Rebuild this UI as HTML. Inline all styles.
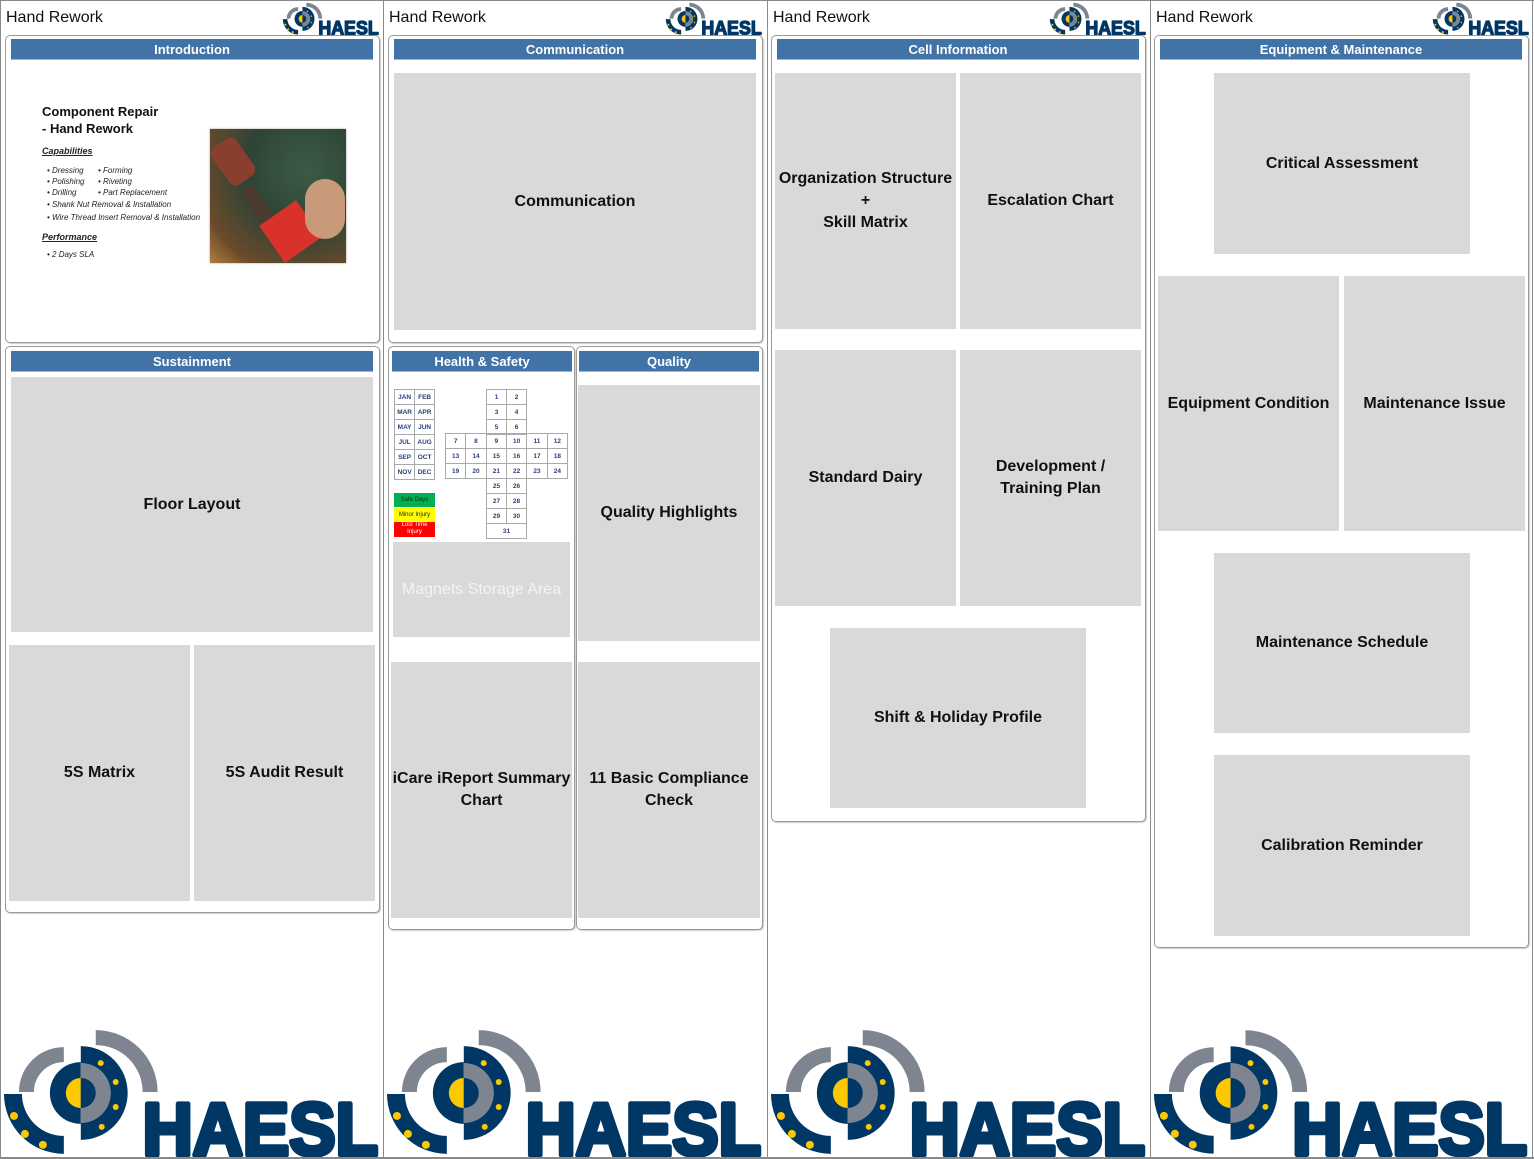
<!DOCTYPE html>
<html><head><meta charset="utf-8"><style>
*{margin:0;padding:0;box-sizing:border-box}
body{width:1534px;height:1159px;background:#fff;position:relative;overflow:hidden;font-family:"Liberation Sans",sans-serif}
.a{position:absolute}
.vl{position:absolute;top:0;width:1px;height:1159px;background:#8a8a8a}
.ht{position:absolute;top:9px;font-size:16px;color:#111}
.pn{position:absolute;border:1.5px solid #9a9a9a;border-radius:5px;background:#fff;box-shadow:1px 1px 1px #ccc}
.bar{position:absolute;height:21px;background:#4173a6;color:#fff;font-weight:bold;font-size:13px;text-align:center;line-height:21px;border-bottom:1px solid #9bb4d0}
.bx{position:absolute;background:#d9d9d9;display:flex;align-items:center;justify-content:center;text-align:center;font-weight:bold;font-size:16px;color:#111;line-height:22px}
.logo{position:absolute;z-index:5}
table{position:absolute;border-collapse:collapse;border:1.5px solid #4cc07a}
td{border:1px solid #aaa;height:15px;font-size:6.5px;font-weight:bold;color:#2b3f7a;text-align:center;padding:0}
.cap{font-style:italic;font-size:8px;color:#222}
</style></head><body>
<svg width="0" height="0" style="position:absolute"><defs>
<symbol id="lg" viewBox="0 0 383 139">
<path d="M18,72 A45 45 0 0 1 63,27 L63,42 A30 30 0 0 0 33,72 Z" fill="#7f8590"/>
<path d="M95,10 A62 62 0 0 1 157,72 L142,72 A47 47 0 0 0 95,25 Z" fill="#7f8590"/>
<path d="M3,74 A60 60 0 0 0 63,134 L63,116 A42 42 0 0 1 21,74 Z" fill="#003764"/>
<path d="M80,42 A31 31 0 0 0 80,104 Z" fill="#003764"/>
<path d="M80,58 A15 15 0 0 0 80,88 Z" fill="#fcc800"/>
<path d="M80,43 A30 30 0 0 1 80,103 Z" fill="#7f8590"/>
<path d="M80,58 A15 15 0 0 1 80,88 Z" fill="#003764"/>
<path d="M80,26 A47 47 0 0 1 80,120 L80,103 A30 30 0 0 0 80,43 Z" fill="#003764"/>
<g fill="#fcc800"><circle cx="100" cy="43" r="3"/><circle cx="115" cy="62" r="3"/><circle cx="115" cy="87" r="3"/><circle cx="101" cy="107" r="3"/>
<circle cx="13" cy="96" r="4"/><circle cx="24" cy="114" r="4"/><circle cx="42" cy="125" r="4"/></g>
<text x="142" y="135" font-family="Liberation Sans" font-weight="bold" font-size="74" fill="#003764" stroke="#003764" stroke-width="5" stroke-linejoin="round" textLength="236" lengthAdjust="spacingAndGlyphs">HAESL</text>
</symbol></defs></svg>

<div class="vl" style="left:0"></div><div class="vl" style="left:383px"></div><div class="vl" style="left:767px"></div><div class="vl" style="left:1150px"></div><div class="vl" style="left:1532px"></div>
<div class="a" style="left:0;top:0;width:1534px;height:1px;background:#8a8a8a"></div>
<div class="a" style="left:0;top:1157px;width:1534px;height:2px;background:#8a8a8a;z-index:6"></div>

<div class="ht" style="left:6px">Hand Rework</div><div class="ht" style="left:389px">Hand Rework</div><div class="ht" style="left:773px">Hand Rework</div><div class="ht" style="left:1156px">Hand Rework</div>
<svg class="logo" style="left:282px;top:0px" width="98" height="36"><use href="#lg"/></svg>
<svg class="logo" style="left:665px;top:0px" width="98" height="36"><use href="#lg"/></svg>
<svg class="logo" style="left:1049px;top:0px" width="98" height="36"><use href="#lg"/></svg>
<svg class="logo" style="left:1432px;top:0px" width="98" height="36"><use href="#lg"/></svg>

<svg class="logo" style="left:1px;top:1020px" width="382" height="139"><use href="#lg"/></svg>
<svg class="logo" style="left:384px;top:1020px" width="382" height="139"><use href="#lg"/></svg>
<svg class="logo" style="left:768px;top:1020px" width="382" height="139"><use href="#lg"/></svg>
<svg class="logo" style="left:1151px;top:1020px" width="381" height="139"><use href="#lg"/></svg>

<!-- col1 -->
<div class="pn" style="left:5px;top:35px;width:375px;height:308px"></div>
<div class="bar" style="left:11px;top:39px;width:362px">Introduction</div>
<div class="a" style="left:42px;top:103px;font-size:13px;font-weight:bold;line-height:17px;color:#111">Component Repair<br>- Hand Rework</div>
<div class="a" style="left:42px;top:146px;font-size:9px;font-weight:bold;font-style:italic;text-decoration:underline;color:#222">Capabilities</div>
<div class="a cap" style="left:47px;top:165px;line-height:11px">• Dressing<br>• Polishing<br>• Drilling</div>
<div class="a cap" style="left:98px;top:165px;line-height:11px">• Forming<br>• Riveting<br>• Part Replacement</div>
<div class="a cap" style="left:47px;top:199px;line-height:12.5px">• Shank Nut Removal &amp; Installation<br>• Wire Thread Insert Removal &amp; Installation</div>
<div class="a" style="left:42px;top:232px;font-size:9px;font-weight:bold;font-style:italic;text-decoration:underline;color:#222">Performance</div>
<div class="a cap" style="left:47px;top:250px">• 2 Days SLA</div>
<div class="a" style="left:210px;top:129px;width:136px;height:134px;overflow:hidden;background:radial-gradient(circle at 70% 30%,#3d5a45 0%,#2e4436 45%,#6b4a2a 80%,#b08040 100%);box-shadow:0 0 2px #999">
<div class="a" style="left:8px;top:10px;width:30px;height:45px;background:#8a3e2e;border-radius:8px;transform:rotate(-35deg)"></div>
<div class="a" style="left:40px;top:55px;width:14px;height:40px;background:#4a3a30;transform:rotate(-35deg)"></div>
<div class="a" style="left:58px;top:80px;width:45px;height:45px;background:#d8322a;transform:rotate(-35deg)"></div>
<div class="a" style="left:95px;top:50px;width:40px;height:60px;background:#c99a7a;border-radius:20px"></div>
</div>

<div class="pn" style="left:5px;top:346px;width:375px;height:567px"></div>
<div class="bar" style="left:11px;top:351px;width:362px">Sustainment</div>
<div class="bx" style="left:11px;top:377px;width:362px;height:255px">Floor Layout</div>
<div class="bx" style="left:9px;top:645px;width:181px;height:256px">5S Matrix</div>
<div class="bx" style="left:194px;top:645px;width:181px;height:256px">5S Audit Result</div>

<!-- col2 -->
<div class="pn" style="left:388px;top:35px;width:375px;height:308px"></div>
<div class="bar" style="left:394px;top:39px;width:362px">Communication</div>
<div class="bx" style="left:394px;top:73px;width:362px;height:257px">Communication</div>

<div class="pn" style="left:388px;top:346px;width:187px;height:584px"></div>
<div class="bar" style="left:392px;top:351px;width:180px">Health &amp; Safety</div>
<table style="left:394px;top:389px;width:41px"><tr><td>JAN</td><td>FEB</td></tr><tr><td>MAR</td><td>APR</td></tr><tr><td>MAY</td><td>JUN</td></tr><tr><td>JUL</td><td>AUG</td></tr><tr><td>SEP</td><td>OCT</td></tr><tr><td>NOV</td><td>DEC</td></tr></table>
<table style="left:486px;top:389px;width:41px;border-bottom:none"><tr><td>1</td><td>2</td></tr><tr><td>3</td><td>4</td></tr><tr><td>5</td><td>6</td></tr></table>
<table style="left:445px;top:433px;width:123px"><tr><td>7</td><td>8</td><td>9</td><td>10</td><td>11</td><td>12</td></tr><tr><td>13</td><td>14</td><td>15</td><td>16</td><td>17</td><td>18</td></tr><tr><td>19</td><td>20</td><td>21</td><td>22</td><td>23</td><td>24</td></tr></table>
<table style="left:486px;top:478px;width:41px;border-top:none"><tr><td>25</td><td>26</td></tr><tr><td>27</td><td>28</td></tr><tr><td>29</td><td>30</td></tr><tr><td colspan="2">31</td></tr></table>
<div class="a" style="left:394px;top:493px;width:41px;height:14px;background:#00b050;font-size:6px;text-align:center;line-height:14px;color:#222">Safe Days</div>
<div class="a" style="left:394px;top:508px;width:41px;height:14px;background:#ffff00;font-size:6px;text-align:center;line-height:14px;color:#222">Minor Injury</div>
<div class="a" style="left:394px;top:522px;width:41px;height:15px;background:#ff0000;font-size:6px;text-align:center;line-height:7px;color:#fff">Lost Time<br>Injury</div>
<div class="bx" style="left:393px;top:542px;width:177px;height:95px;color:#f4f4f4;font-weight:normal;font-size:16px">Magnets Storage Area</div>
<div class="bx" style="left:391px;top:662px;width:181px;height:256px">iCare iReport Summary<br>Chart</div>

<div class="pn" style="left:576px;top:346px;width:187px;height:584px"></div>
<div class="bar" style="left:579px;top:351px;width:180px">Quality</div>
<div class="bx" style="left:578px;top:385px;width:182px;height:256px">Quality Highlights</div>
<div class="bx" style="left:578px;top:662px;width:182px;height:256px">11 Basic Compliance<br>Check</div>

<!-- col3 -->
<div class="pn" style="left:771px;top:35px;width:375px;height:787px"></div>
<div class="bar" style="left:777px;top:39px;width:362px">Cell Information</div>
<div class="bx" style="left:775px;top:73px;width:181px;height:256px">Organization Structure<br>+<br>Skill Matrix</div>
<div class="bx" style="left:960px;top:73px;width:181px;height:256px">Escalation Chart</div>
<div class="bx" style="left:775px;top:350px;width:181px;height:256px">Standard Dairy</div>
<div class="bx" style="left:960px;top:350px;width:181px;height:256px">Development /<br>Training Plan</div>
<div class="bx" style="left:830px;top:628px;width:256px;height:180px">Shift &amp; Holiday Profile</div>

<!-- col4 -->
<div class="pn" style="left:1154px;top:35px;width:375px;height:913px"></div>
<div class="bar" style="left:1160px;top:39px;width:362px">Equipment &amp; Maintenance</div>
<div class="bx" style="left:1214px;top:73px;width:256px;height:181px">Critical Assessment</div>
<div class="bx" style="left:1158px;top:276px;width:181px;height:255px">Equipment Condition</div>
<div class="bx" style="left:1344px;top:276px;width:181px;height:255px">Maintenance Issue</div>
<div class="bx" style="left:1214px;top:553px;width:256px;height:180px">Maintenance Schedule</div>
<div class="bx" style="left:1214px;top:755px;width:256px;height:181px">Calibration Reminder</div>
</body></html>
